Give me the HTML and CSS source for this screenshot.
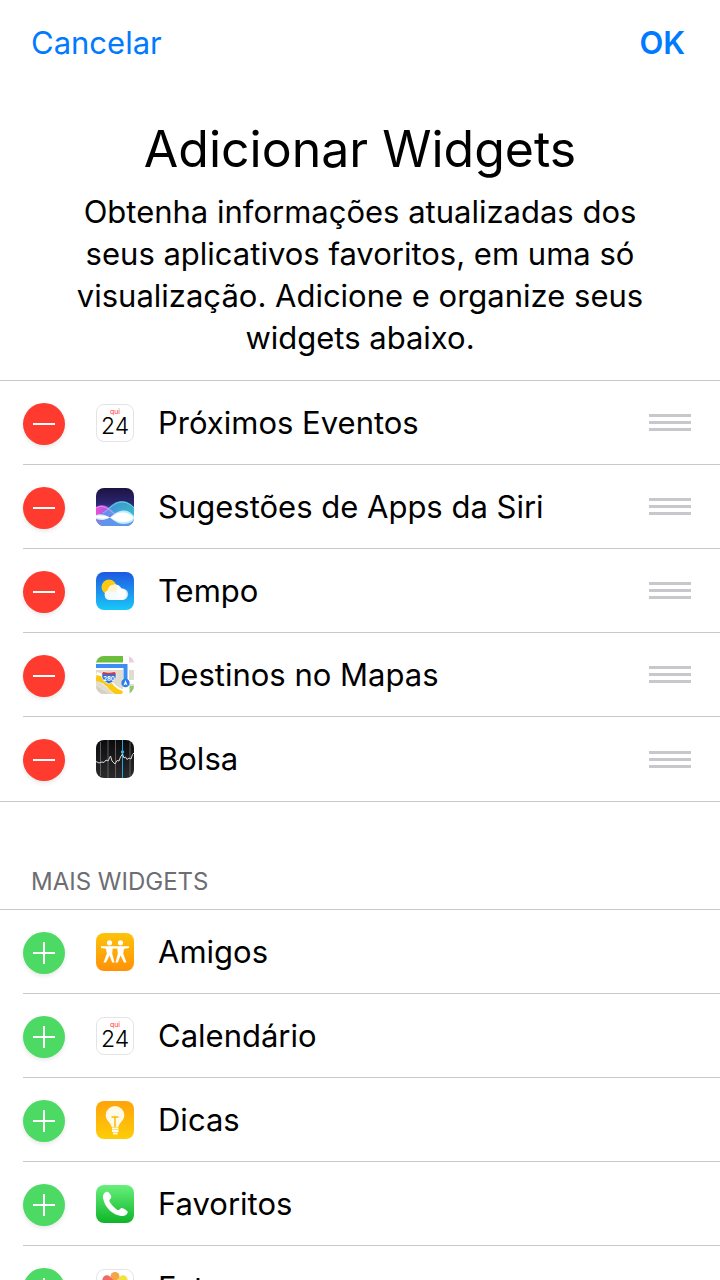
FILE: index.html
```
<!DOCTYPE html>
<html lang="pt-BR">
  <head>
    <meta charset="UTF-8" />
    <meta name="viewport" content="width=device-width, initial-scale=1.0" />
    <title>Adicionar Widgets</title>
    <link rel="stylesheet" href="styles.css">
  </head>
  <body>
    <div class="app">
      <header class="nav">
        <button type="button" class="nav-btn">Cancelar</button>
        <button type="button" class="nav-btn nav-btn-done">OK</button>
      </header>

      <main>
        <section class="intro">
          <h1>Adicionar Widgets</h1>
          <p>
            Obtenha informações atualizadas dos seus aplicativos favoritos, em
            uma só visualização. Adicione e organize seus widgets abaixo.
          </p>
        </section>

        <ul class="widget-list">
          <li>
            <button type="button" class="toggle remove" aria-label="Remover Próximos Eventos"></button>
            <div class="icon calendar">
              <span class="weekday">qui</span>
              <span class="day">24</span>
            </div>
            <span class="name">Próximos Eventos</span>
            <button type="button" class="handle" aria-label="Mover Próximos Eventos"></button>
          </li>
          <li>
            <button type="button" class="toggle remove" aria-label="Remover Sugestões de Apps da Siri"></button>
            <svg class="icon" viewBox="0 0 38 38">
              <defs>
                <linearGradient id="siriBg" x1="0" y1="0" x2="0" y2="1">
                  <stop offset="0" stop-color="#1c1440" />
                  <stop offset="0.4" stop-color="#2b2470" />
                  <stop offset="0.75" stop-color="#3b6fd0" />
                  <stop offset="1" stop-color="#5aa8ec" />
                </linearGradient>
                <linearGradient id="siriPink" x1="0" y1="0" x2="1" y2="0">
                  <stop offset="0" stop-color="#e84fd8" />
                  <stop offset="0.5" stop-color="#8a62e8" />
                  <stop offset="1" stop-color="#4a86f0" stop-opacity="0.6" />
                </linearGradient>
                <linearGradient id="siriCyan" x1="0" y1="0" x2="1" y2="0">
                  <stop offset="0" stop-color="#5a8cf0" />
                  <stop offset="0.5" stop-color="#45bfe8" />
                  <stop offset="1" stop-color="#3fd6d8" />
                </linearGradient>
                <clipPath id="siriClip"><rect width="38" height="38" rx="8" /></clipPath>
              </defs>
              <g clip-path="url(#siriClip)">
                <rect width="38" height="38" fill="url(#siriBg)" />
                <path d="M0 19C5 16 10 17 15 21C21 26 29 34 38 30V38H0Z" fill="url(#siriPink)" />
                <path d="M5 27C12 21 17 13 26 13C31 13 35 16 38 19V29L20 25L12 29Z" fill="url(#siriCyan)" opacity="0.75" />
                <path d="M7 25C14 21 18 14 26 14C31 14 35 17 38 20" fill="none" stroke="#6fe3ee" opacity="0.8" />
                <path d="M0 20C6 17 10 19 15 23C19 26 22 30 27 33" fill="none" stroke="#f39cf0" opacity="0.8" />
                <path d="M0 32C6 34 10 32 14 29C19 34 26 37 38 33V38H0Z" fill="#5f95ea" />
                <path d="M0 27C5 25 10 27 14 29.500C19 25 23 22.500 28 22.500C33 22.500 36 26 38 28V32C35 35 31 36 27 36C22 36 18 33 14 29.500C10 32 5 33 0 31Z" fill="#b9effc" />
                <path d="M0 28C5 27 10 28 14 29.500C10 31 5 31 0 30ZM14 29.500C19 26 23 24 28 24.500C33 25 36 28 38 30C35 33 31 34 27 34C22 34 18 32 14 29.500Z" fill="#fff" />
              </g>
            </svg>
            <span class="name">Sugestões de Apps da Siri</span>
            <button type="button" class="handle" aria-label="Mover Sugestões de Apps da Siri"></button>
          </li>
          <li>
            <button type="button" class="toggle remove" aria-label="Remover Tempo"></button>
            <svg class="icon" viewBox="0 0 38 38">
              <defs>
                <linearGradient id="sky" x1="0" y1="0" x2="0" y2="1">
                  <stop offset="0" stop-color="#1f57e2" />
                  <stop offset="1" stop-color="#19c8f8" />
                </linearGradient>
              </defs>
              <rect width="38" height="38" rx="8" fill="url(#sky)" />
              <circle cx="13" cy="15" r="7.500" fill="#fdc911" />
              <path d="M14 28a5 5 0 0 1-2.500-9.500A7.500 7.500 0 0 1 25.500 16.500A6 6 0 0 1 27 28Z" fill="#f5fafe" />
              <path d="M12 18.500A7.500 7.500 0 0 1 20 12.300A9 9 0 0 1 20 19Q16 21 12 18.500Z" fill="#fff0b5" opacity="0.7" />
              <circle cx="26.500" cy="22.300" r="5.700" fill="#fff" opacity="0.7" />
            </svg>
            <span class="name">Tempo</span>
            <button type="button" class="handle" aria-label="Mover Tempo"></button>
          </li>
          <li>
            <button type="button" class="toggle remove" aria-label="Remover Destinos no Mapas"></button>
            <svg class="icon" viewBox="0 0 38 38">
              <defs>
                <clipPath id="mapClip"><rect width="38" height="38" rx="8" /></clipPath>
              </defs>
              <g clip-path="url(#mapClip)">
                <rect width="38" height="38" fill="#e2dccf" />
                <path d="M0 0H27V7H0Z" fill="#6cbf3d" />
                <path d="M33 0H38V6H33Z" fill="#f3c9de" />
                <path d="M27 0H33V38H27ZM0 6.500H38V14H0ZM27 24H38V28H27Z" fill="#fff" />
                <path d="M34 30H38V38H34Z" fill="#8ccf65" />
                <path d="M0 30L13 38H0Z" fill="#d5d0c4" />
                <path d="M0 20C8 22 13 28 17 32C20 35 24 37 28 38" fill="none" stroke="#fff" stroke-width="8" />
                <path d="M0 22C7 23 13 28 16 32C19 35 23 37 26 38" fill="none" stroke="#fbc911" stroke-width="6" />
                <path d="M0 10H29.500V27" fill="none" stroke="#3c8df5" stroke-width="4" />
                <path d="M7 16Q13 17.500 19 16Q21 19 20 22Q18 26 13 28Q8 26 6 22Q5 19 7 16Z" fill="#2474dd" stroke="#fff" stroke-width="0.800" />
                <path d="M7 16Q13 17.500 19 16L20 18.500H6Z" fill="#dd3744" />
                <text x="13" y="24.500" text-anchor="middle" font-size="6" font-weight="700" fill="#fff">280</text>
                <circle cx="29.500" cy="27" r="4.200" fill="#2c7ee8" />
                <path d="M29.500 24L31.500 29.500L29.500 28.300L27.500 29.500Z" fill="#fff" />
              </g>
            </svg>
            <span class="name">Destinos no Mapas</span>
            <button type="button" class="handle" aria-label="Mover Destinos no Mapas"></button>
          </li>
          <li>
            <button type="button" class="toggle remove" aria-label="Remover Bolsa"></button>
            <svg class="icon" viewBox="0 0 38 38">
              <defs>
                <linearGradient id="chartBg" x1="0" y1="0" x2="0" y2="1">
                  <stop offset="0" stop-color="#0b0b0d" />
                  <stop offset="1" stop-color="#2b2b2d" />
                </linearGradient>
              </defs>
              <rect width="38" height="38" rx="8" fill="url(#chartBg)" />
              <path d="M4.500 2V36M12 0V38M19.500 0V38M34 2V36" stroke="#77706c" stroke-width="0.800" />
              <path d="M26.500 0V38" stroke="#1fa9dc" />
              <path d="M0 21.500L3 23L6 22L8 22.500L10 20L12 21L14.500 16L16 21L19 24L21 20.500L23 21L24.500 17L26.500 14L28 18L29.500 17L31 19.500L33 18L35 19L36.500 14.500L38 13" fill="none" stroke="#d8d8d8" stroke-linejoin="round" />
              <circle cx="26.500" cy="12" r="1.700" fill="#2fb9ef" />
            </svg>
            <span class="name">Bolsa</span>
            <button type="button" class="handle" aria-label="Mover Bolsa"></button>
          </li>
        </ul>

        <h2>MAIS WIDGETS</h2>

        <ul class="widget-list">
          <li>
            <button type="button" class="toggle add" aria-label="Adicionar Amigos"></button>
            <svg class="icon" viewBox="0 0 38 38">
              <defs>
                <linearGradient id="friendsBg" x1="0" y1="0" x2="0" y2="1">
                  <stop offset="0" stop-color="#fdc30a" />
                  <stop offset="1" stop-color="#ff9108" />
                </linearGradient>
              </defs>
              <rect width="38" height="38" rx="8" fill="url(#friendsBg)" />
              <circle cx="13.500" cy="9.800" r="2.600" fill="#fff" />
              <circle cx="24.500" cy="9.800" r="2.600" fill="#fff" />
              <path d="M5 13.300H33V15L28 15.800L27.200 20.500L30.500 29.500H28L24.500 22.500L21.800 29.500H19.500L21.800 20.500L21.300 15.500H16.700L16.200 20.500L18.500 29.500H16.200L13.500 22.500L10 29.500H7.500L10.800 20.500L10 15.800L5 15Z" fill="#fff" />
            </svg>
            <span class="name">Amigos</span>
          </li>
          <li>
            <button type="button" class="toggle add" aria-label="Adicionar Calendário"></button>
            <div class="icon calendar">
              <span class="weekday">qui</span>
              <span class="day">24</span>
            </div>
            <span class="name">Calendário</span>
          </li>
          <li>
            <button type="button" class="toggle add" aria-label="Adicionar Dicas"></button>
            <svg class="icon" viewBox="0 0 38 38">
              <defs>
                <linearGradient id="tipsBg" x1="0" y1="0" x2="0" y2="1">
                  <stop offset="0" stop-color="#ffa30a" />
                  <stop offset="1" stop-color="#fdcd08" />
                </linearGradient>
              </defs>
              <rect width="38" height="38" rx="8" fill="url(#tipsBg)" />
              <path d="M19 5A9.300 9.300 0 0 0 9.700 14.300C9.700 19.500 15 22 15.700 26H22.300C23 22 28.300 19.500 28.300 14.300A9.300 9.300 0 0 0 19 5Z" fill="#fffbe8" />
              <path d="M15.500 16H22.500M19 16V26" fill="none" stroke="#fbb60b" stroke-width="1.500" />
              <path d="M16 27.500H22.500M16 30H22.500M17 32.500H21.500" stroke="#fffbe8" stroke-width="1.800" />
            </svg>
            <span class="name">Dicas</span>
          </li>
          <li>
            <button type="button" class="toggle add" aria-label="Adicionar Favoritos"></button>
            <svg class="icon" viewBox="0 0 38 38">
              <defs>
                <linearGradient id="phoneBg" x1="0" y1="0" x2="0" y2="1">
                  <stop offset="0" stop-color="#67f07c" />
                  <stop offset="1" stop-color="#0eb528" />
                </linearGradient>
              </defs>
              <rect width="38" height="38" rx="8" fill="url(#phoneBg)" />
              <path d="M10 7C7 8.500 6.500 11 7.500 15C9.500 23 17 30 25 31C28.500 31.500 31 30 31.700 27.500C32 26.500 31 25.500 27.500 23.500C25.500 22.500 24.700 23 23.500 24.500C22.500 25.700 21.500 25.300 19.500 23.500C17 21.300 15 19 13.800 17C13 15.500 13.200 15 14.500 13.800C15.800 12.500 15.500 11.500 14 9C12.500 6.700 11.500 6.200 10 7Z" fill="#fff" />
            </svg>
            <span class="name">Favoritos</span>
          </li>
          <li>
            <button type="button" class="toggle add" aria-label="Adicionar Fotos"></button>
            <svg class="icon" viewBox="0 0 38 38">
              <rect x="0.500" y="0.500" width="37" height="37" rx="8" fill="#fff" stroke="#e4e4e6" />
              <g opacity="0.850">
                <rect x="14.500" y="3" width="9" height="14" rx="4.500" fill="#f7942b" />
                <rect x="14.500" y="3" width="9" height="14" rx="4.500" fill="#f1dc1c" transform="rotate(45 19 19)" />
                <rect x="14.500" y="3" width="9" height="14" rx="4.500" fill="#b3d334" transform="rotate(90 19 19)" />
                <rect x="14.500" y="3" width="9" height="14" rx="4.500" fill="#63bd8c" transform="rotate(135 19 19)" />
                <rect x="14.500" y="3" width="9" height="14" rx="4.500" fill="#66aee0" transform="rotate(180 19 19)" />
                <rect x="14.500" y="3" width="9" height="14" rx="4.500" fill="#8d82c4" transform="rotate(225 19 19)" />
                <rect x="14.500" y="3" width="9" height="14" rx="4.500" fill="#c77bb4" transform="rotate(270 19 19)" />
                <rect x="14.500" y="3" width="9" height="14" rx="4.500" fill="#ee4f4a" transform="rotate(315 19 19)" />
              </g>
            </svg>
            <span class="name">Fotos</span>
          </li>
        </ul>
      </main>
    </div>
  </body>
</html>
```
FILE: styles.css
```
:root {
  --blue: #007aff;
  --red: #ff3b30;
  --green: #4cd964;
  --line: #c8c7cc;
  --gray: #6d6d72;
}

* {
  box-sizing: border-box;
}

body {
  margin: 0;
  background: #fff;
  color: #000;
  font-family: Inter, "Liberation Sans", sans-serif;
  font-size: 31px;
  line-height: 42px;
}

button {
  padding: 0;
  border: none;
  background: none;
  font: inherit;
  cursor: pointer;
}

/* Scrolling screen */
.app {
  height: 100vh;
  overflow-y: auto;
  scrollbar-width: none;
}

.nav {
  display: flex;
  justify-content: space-between;
  padding: 22px 35px 22px 31px;
}

.nav-btn {
  color: var(--blue);
}

.nav-btn-done {
  font-weight: 600;
}

/* Title and description */
.intro {
  padding: 31px 72px 21px;
  text-align: center;
}

h1 {
  margin: 0 0 10px;
  font-size: 50px;
  font-weight: 400;
  line-height: 64px;
}

.intro p {
  margin: 0;
}

/* Widget lists */
.widget-list {
  margin: 0;
  padding: 0;
  list-style: none;
  border-top: 1px solid var(--line);
}

.widget-list li {
  display: flex;
  align-items: center;
  height: 84px;
  margin-left: 23px;
  padding-right: 29px;
  border-bottom: 1px solid var(--line);
}

.widget-list li:last-child {
  height: 85px;
  margin-left: 0;
  padding-left: 23px;
}

.toggle {
  flex: none;
  display: grid;
  place-items: center;
  width: 42px;
  height: 42px;
  margin: 2px 31px 0 0;
  border-radius: 50%;
  box-shadow: 0 2px 4px rgba(0, 0, 0, 0.1);
}

.toggle::before,
.toggle::after {
  content: "";
  grid-area: 1 / 1;
  width: 22px;
  height: 2px;
  background: #fff;
}

.remove {
  background: var(--red);
}

.remove::after {
  display: none;
}

.add {
  background: var(--green);
}

.add::after {
  width: 2px;
  height: 22px;
}

.icon {
  flex: none;
  width: 38px;
  height: 38px;
  margin-right: 24px;
}

.calendar {
  display: flex;
  flex-direction: column;
  align-items: center;
  padding-top: 3px;
  border: 1px solid #e4e4e6;
  border-radius: 8px;
}

.weekday {
  color: var(--red);
  font-size: 7px;
  line-height: 8px;
}

.day {
  font-size: 23px;
  font-weight: 300;
  line-height: 20px;
}

.name {
  flex: 1;
}

.handle {
  width: 42px;
  height: 17px;
  border: solid var(--line);
  border-width: 3px 0;
  background: linear-gradient(var(--line), var(--line)) center / 100% 3px no-repeat;
}

h2 {
  margin: 0;
  padding: 64px 31px 11px;
  color: var(--gray);
  font-size: 24px;
  font-weight: 400;
  line-height: 32px;
}
```
